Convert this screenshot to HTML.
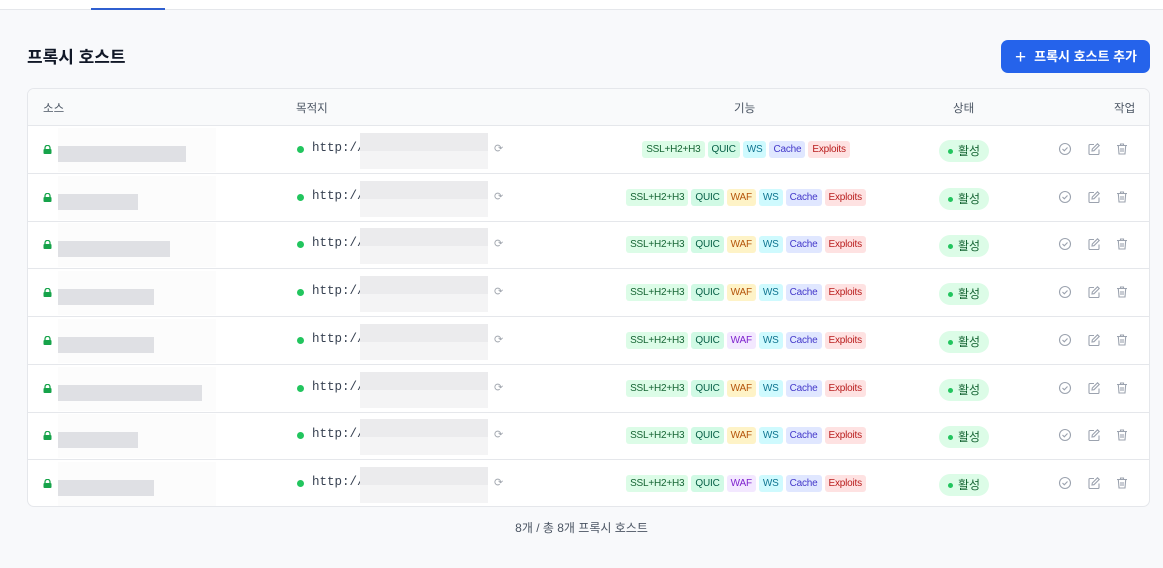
<!DOCTYPE html><html><head><meta charset="utf-8"><style>
*{box-sizing:border-box;margin:0;padding:0}
body{width:1163px;height:568px;background:#f8f9fb;font-family:"Liberation Sans","Noto Sans CJK KR",sans-serif;position:relative;overflow:hidden;color:#111827}
.top{position:absolute;left:0;top:0;width:1163px;height:10px;background:#fff;border-bottom:1px solid #e5e7eb}
.tabline{position:absolute;left:91px;top:8px;width:74px;height:2px;background:#2f5fd0}
h1{position:absolute;left:27px;top:43px;font-size:17px;font-weight:700}
.btn{position:absolute;left:1001px;top:40px;width:149px;height:33px;background:#2563eb;border-radius:7px;color:#fff;font-size:13px;font-weight:700;line-height:33px;padding-left:14px}
.btn span{font-weight:300;font-size:19px;vertical-align:-2px;margin-right:8px}
.card{position:absolute;left:27px;top:88px;width:1123px;height:419px;background:#fff;border:1px solid #e5e7eb;border-radius:7px;overflow:hidden}
.th{position:absolute;top:0;height:37px;width:1123px;background:#f9fafb;border-bottom:1px solid #e5e7eb;font-size:11.5px;color:#4b5563}
.th div{position:absolute;top:11px}
.row{position:absolute;left:0;width:1123px;height:48px;border-bottom:1px solid #e5e7eb}
.lock{position:absolute;left:15px;top:19px;width:9px;height:9px}
.g{position:absolute;background:#dfe0e4}
.wb{position:absolute;background:#fcfcfc}
.dot{position:absolute;left:269px;top:20px;width:7px;height:7px;border-radius:50%;background:#22c55e}
.http{position:absolute;left:284px;top:15px;font-family:"Liberation Mono",monospace;font-size:12.5px;color:#374151}
.dst{position:absolute;left:332px;top:7px;width:128px;height:36px;background:linear-gradient(#ebebed 0 50%,#f4f4f5 50%)}
.ref{position:absolute;left:466px;top:16px;color:#a3a8b0;font-size:11px}
.tags{position:absolute;left:430px;width:576px;top:15px;text-align:center;white-space:nowrap;font-size:0}
.t{display:inline-block;font-size:10px;height:17px;line-height:17px;padding:0 4px;border-radius:3px;margin:0 1.5px;letter-spacing:-0.2px}
.ssl{background:#dcfce7;color:#166534}.q{background:#d1fae5;color:#065f46}.waf{background:#fef3c7;color:#b45309}.wafp{background:#f3e8ff;color:#7e22ce}.ws{background:#cffafe;color:#0e7490}.c{background:#e0e7ff;color:#4338ca}.e{background:#fee2e2;color:#b91c1c}
.st{position:absolute;left:911px;top:14px;width:50px;height:22px;border-radius:11px;background:#dcfce7;color:#166534;font-size:12px;line-height:22px;padding-left:19px}
.st:before{content:"";position:absolute;left:9px;top:9px;width:5px;height:5px;border-radius:50%;background:#22c55e}
.ic{position:absolute;top:16px;width:14px;height:14px}
.foot{position:absolute;top:519px;left:0;width:1163px;text-align:center;font-size:12px;color:#4b5563}
</style></head><body>
<div class="top"></div><div class="tabline"></div>
<h1>프록시 호스트</h1>
<div class="btn"><span>+</span>프록시 호스트 추가</div>
<div class="card">
<div class="th"><div style="left:15px">소스</div><div style="left:268px">목적지</div><div style="left:706px">기능</div><div style="left:925px">상태</div><div style="left:1086px">작업</div></div>
<div id="rows"></div>
</div>
<div class="foot">8개 / 총 8개 프록시 호스트</div>
<script>
var w=[128,80,112,96,96,144,80,96],waf=[0,1,1,1,2,1,1,2],h='';
for(var i=0;i<8;i++){var y=37+i*47.7;
h+='<div class="row" style="top:'+y+'px">'+
'<svg class="lock" viewBox="0 0 9 9"><path d="M2 4V2.8a2.5 2.5 0 0 1 5 0V4" fill="none" stroke="#16a34a" stroke-width="1.3"/><rect x="0.5" y="4" width="8" height="5" rx="1" fill="#16a34a"/></svg>'+
'<div class="wb" style="left:30px;top:2px;width:158px;height:44px"></div>'+
'<div class="g" style="left:30px;top:20px;width:'+w[i]+'px;height:16px"></div>'+
'<div class="dot"></div><div class="http">http://</div><div class="dst"></div><div class="ref">⟳</div>'+
'<div class="tags"><span class="t ssl">SSL+H2+H3</span><span class="t q">QUIC</span>'+(waf[i]==1?'<span class="t waf">WAF</span>':waf[i]==2?'<span class="t wafp">WAF</span>':'')+'<span class="t ws">WS</span><span class="t c">Cache</span><span class="t e">Exploits</span></div>'+
'<div class="st">활성</div>'+
'<svg class="ic" style="left:1030px" viewBox="0 0 14 14" fill="none" stroke="#9ca3af" stroke-width="1.1"><circle cx="7" cy="7" r="5.5"/><path d="M4.5 7l1.8 1.8L9.5 5.5"/></svg>'+
'<svg class="ic" style="left:1059px" viewBox="0 0 14 14" fill="none" stroke="#9ca3af" stroke-width="1.1"><path d="M7 2.5H3a1 1 0 0 0-1 1v8a1 1 0 0 0 1 1h8a1 1 0 0 0 1-1V7.5"/><path d="M10.5 1.8l1.7 1.7L7 8.7 5 9l.3-2z"/></svg>'+
'<svg class="ic" style="left:1087px" viewBox="0 0 14 14" fill="none" stroke="#9ca3af" stroke-width="1.1"><path d="M2 3.5h10M5.5 3.5V2h3v1.5M3.3 3.5l.7 8.5h6l.7-8.5M6 6v4M8 6v4"/></svg>'+
'</div>';}
document.getElementById('rows').innerHTML=h;
</script>
</body></html>
